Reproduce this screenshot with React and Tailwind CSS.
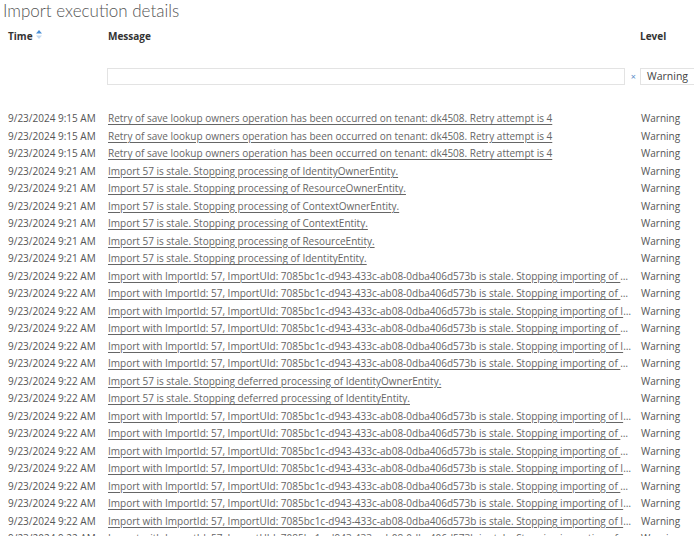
import React from "react";

const RETRY = "Retry of save lookup owners operation has been occurred on tenant: dk4508. Retry attempt is 4";
const STALE = (e) => `Import 57 is stale. Stopping processing of ${e}.`;
const DEF = (e) => `Import 57 is stale. Stopping deferred processing of ${e}.`;
const IMP = (e) => `Import with ImportId: 57, ImportUId: 7085bc1c-d943-433c-ab08-0dba406d573b is stale. Stopping importing of ${e}.`;

const rows = [
  ["9/23/2024 9:15 AM", RETRY],
  ["9/23/2024 9:15 AM", RETRY],
  ["9/23/2024 9:15 AM", RETRY],
  ["9/23/2024 9:21 AM", STALE("IdentityOwnerEntity")],
  ["9/23/2024 9:21 AM", STALE("ResourceOwnerEntity")],
  ["9/23/2024 9:21 AM", STALE("ContextOwnerEntity")],
  ["9/23/2024 9:21 AM", STALE("ContextEntity")],
  ["9/23/2024 9:21 AM", STALE("ResourceEntity")],
  ["9/23/2024 9:21 AM", STALE("IdentityEntity")],
  ["9/23/2024 9:22 AM", IMP("ContextOwnerEntity")],
  ["9/23/2024 9:22 AM", IMP("ResourceOwnerEntity")],
  ["9/23/2024 9:22 AM", IMP("IdentityOwnerEntity")],
  ["9/23/2024 9:22 AM", IMP("ContextEntity")],
  ["9/23/2024 9:22 AM", IMP("IdentityEntity")],
  ["9/23/2024 9:22 AM", IMP("ResourceEntity")],
  ["9/23/2024 9:22 AM", DEF("IdentityOwnerEntity")],
  ["9/23/2024 9:22 AM", DEF("IdentityEntity")],
  ["9/23/2024 9:22 AM", IMP("IdentityOwnerEntity")],
  ["9/23/2024 9:22 AM", IMP("ContextOwnerEntity")],
  ["9/23/2024 9:22 AM", IMP("ResourceOwnerEntity")],
  ["9/23/2024 9:22 AM", IMP("IdentityEntity")],
  ["9/23/2024 9:22 AM", IMP("ContextEntity")],
  ["9/23/2024 9:22 AM", IMP("IdentityOwnerEntity")],
  ["9/23/2024 9:22 AM", IMP("IdentityEntity")],
  ["9/23/2024 9:22 AM", IMP("ContextEntity")],
  ["9/23/2024 9:22 AM", IMP("ResourceEntity")],
];

function SortIcon() {
  return (
    <svg width="6" height="9" viewBox="0 0 6 9" className="ml-[3px] -mt-[4px]">
      <path d="M0 3.5 L3 0 L6 3.5 Z" fill="#4a8fd6" />
      <path d="M0 5.5 L3 9 L6 5.5 Z" fill="#c5daf0" />
    </svg>
  );
}

export default function App() {
  return (
    <div
      className="w-[694px] h-[536px] overflow-hidden bg-white"
      style={{ fontFamily: '"Open Sans", "Liberation Sans", sans-serif' }}
    >
      <div
        className="pl-[3px] text-[17px] leading-[22px] font-light text-[#555]"
        style={{ fontFamily: 'Lato, "Open Sans", sans-serif' }}
      >
        Import execution details
      </div>

      <div className="mt-[6px] grid grid-cols-[104px_532px_1fr] h-[16px] leading-[16px] text-[10px] font-bold text-[#333]">
        <div className="pl-[8px] flex items-center">
          Time
          <SortIcon />
        </div>
        <div className="pl-[4px]">Message</div>
        <div className="pl-[4px]">Level</div>
      </div>

      <div className="mt-[24px] grid grid-cols-[104px_532px_1fr] h-[17px] items-center">
        <div />
        <div className="flex items-center pl-[3px] h-[17px]">
          <div className="flex-1 h-[17px] border border-[#e3e3e3] bg-white" />
          <span className="w-[11px] text-right text-[9px] leading-none text-[#5a8cc8]">×</span>
        </div>
        <div className="pl-[4px] h-[17px]">
          <div className="h-[17px] w-[80px] border border-[#e3e3e3] pl-[6px] text-[10.5px] leading-[15px] text-[#444]">
            Warning
          </div>
        </div>
      </div>

      <div className="mt-[25px]">
        {rows.map(([t, m], i) => (
          <div
            key={i}
            className="grid grid-cols-[104px_532px_1fr] h-[17.5px] leading-[17.5px] text-[10px]"
          >
            <div className="pl-[8px] text-[#555] whitespace-nowrap">{t}</div>
            <div className="pl-[4px] pr-[2px] text-[#666] whitespace-nowrap overflow-hidden text-ellipsis">
              <span className="underline underline-offset-[2px]">{m}</span>
            </div>
            <div className="pl-[5px] text-[#555] whitespace-nowrap">Warning</div>
          </div>
        ))}
      </div>
    </div>
  );
}
